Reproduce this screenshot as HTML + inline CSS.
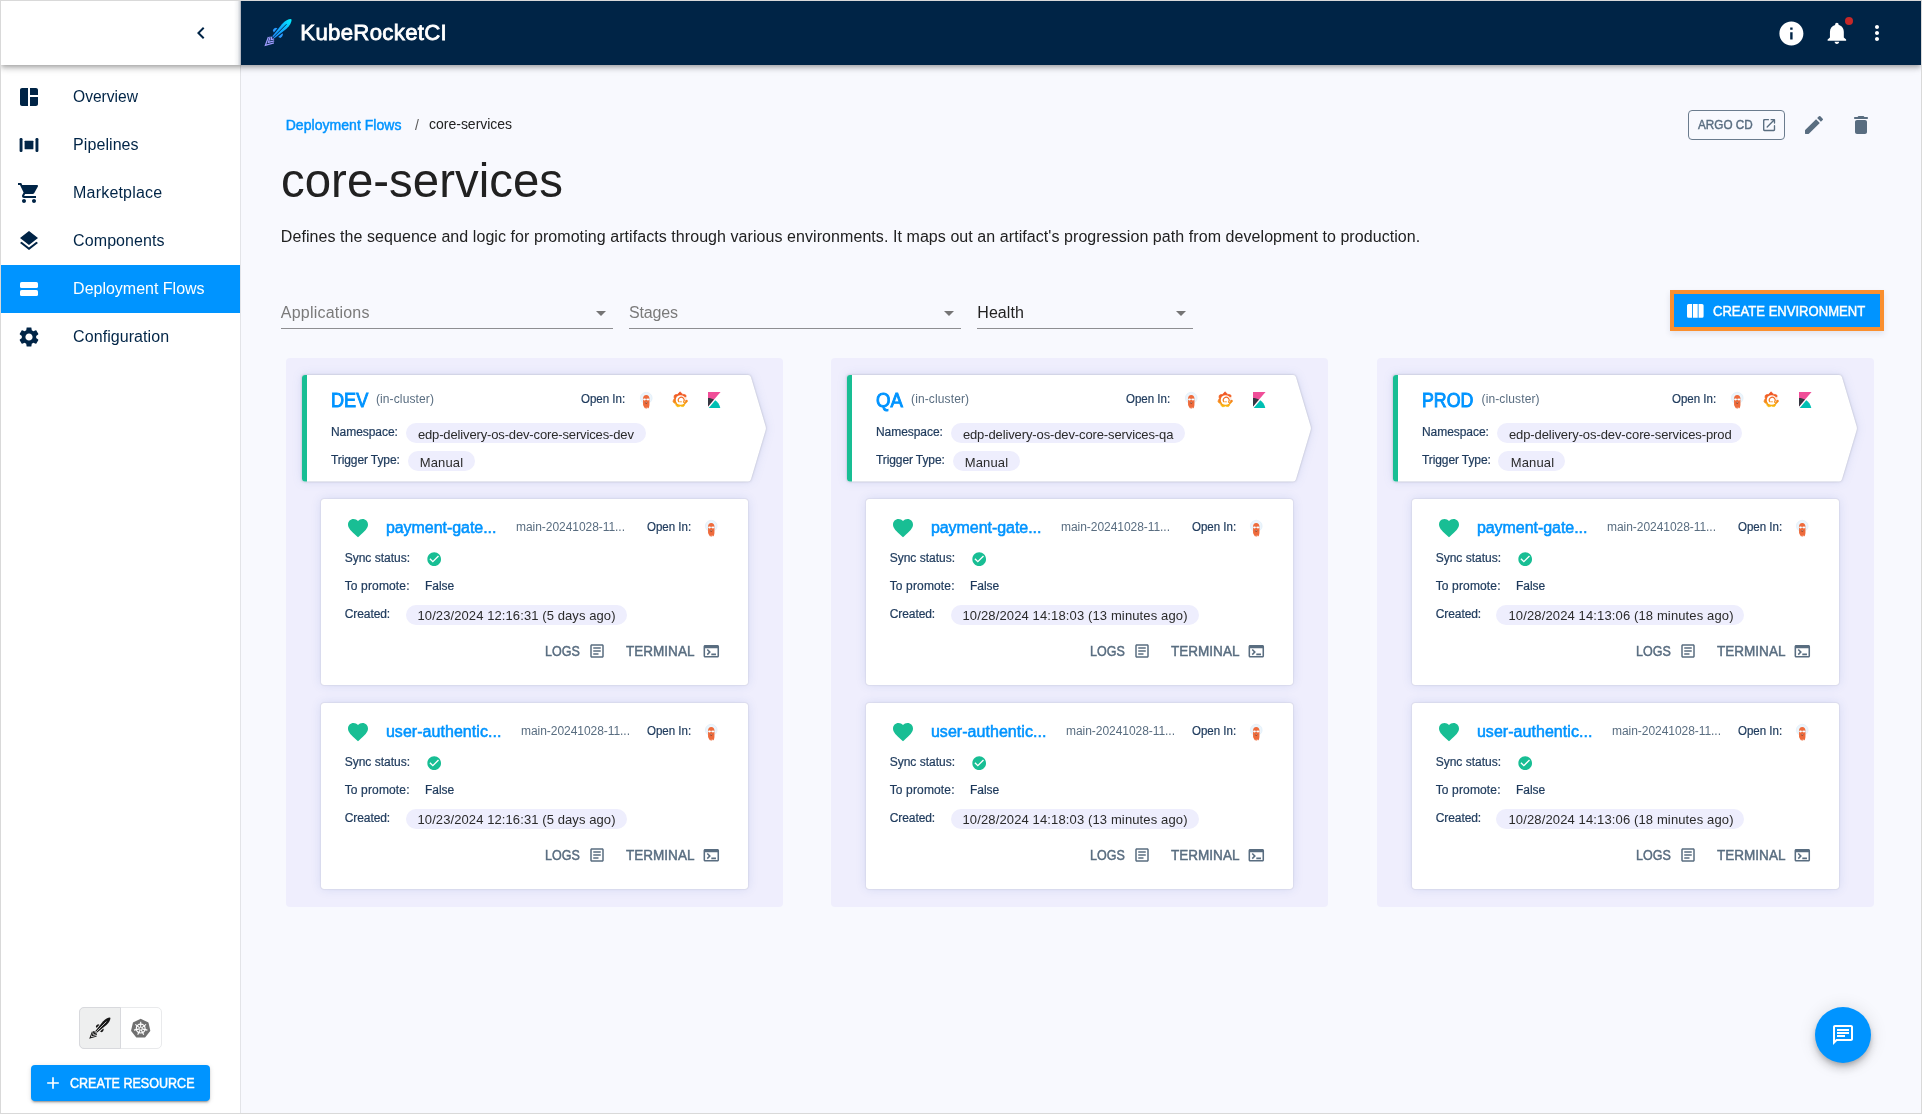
<!DOCTYPE html>
<html><head><meta charset="utf-8"><title>KubeRocketCI</title>
<style>
html,body{margin:0;padding:0}
body{width:1922px;height:1114px;overflow:hidden;position:relative;background:#F8F9FE;font-family:"Liberation Sans",sans-serif}
.t{position:absolute;white-space:nowrap;line-height:1;-webkit-font-smoothing:antialiased}
.i{position:absolute;display:block;overflow:visible}
.b{position:absolute;box-sizing:border-box}
#W{position:absolute;left:0;top:0;width:1922px;height:1114px;will-change:transform}
</style></head><body><div id="W">

<div class="b" style="left:1px;top:1px;width:240px;height:1112px;background:#fff;border-right:1px solid #E3E4E8"></div>
<div class="b" style="left:1px;top:265px;width:239px;height:48px;background:#0094FF"></div>
<svg class="i" style="left:17.00px;top:85.00px" width="24" height="24" viewBox="0 0 24 24" ><path d="M11 21H5c-1.1 0-2-.9-2-2V5c0-1.1.9-2 2-2h6v18zm2 0h6c1.1 0 2-.9 2-2v-7h-8v9zm8-11V5c0-1.1-.9-2-2-2h-6v7h8z" fill="#002446"/></svg>
<span id="t1" class="t" style="left:73.10px;top:89.00px;font-size:16px;color:#002446;font-weight:400;letter-spacing:0.000px;transform:scaleX(0.9743);transform-origin:0 50%;">Overview</span>
<svg class="i" style="left:17.00px;top:133.00px" width="24" height="24" viewBox="0 0 24 24" ><rect x="2.6" y="5" width="2.9" height="14" rx="1.2" fill="#002446"/><rect x="18.5" y="5" width="2.9" height="14" rx="1.2" fill="#002446"/><rect x="7.6" y="7.7" width="8.8" height="8.6" rx=".6" fill="#002446"/></svg>
<span id="t2" class="t" style="left:73.10px;top:137.00px;font-size:16px;color:#002446;font-weight:400;letter-spacing:0.070px;">Pipelines</span>
<svg class="i" style="left:17.00px;top:181.00px" width="24" height="24" viewBox="0 0 24 24" ><path d="M7 18c-1.1 0-1.99.9-1.99 2S5.9 22 7 22s2-.9 2-2-.9-2-2-2zM1 2v2h2l3.6 7.59-1.35 2.45c-.16.28-.25.61-.25.96 0 1.1.9 2 2 2h12v-2H7.42c-.14 0-.25-.11-.25-.25l.03-.12.9-1.63h7.45c.75 0 1.41-.41 1.75-1.03l3.58-6.49c.08-.14.12-.31.12-.48 0-.55-.45-1-1-1H5.21l-.94-2H1zm16 16c-1.1 0-1.99.9-1.99 2s.89 2 1.99 2 2-.9 2-2-.9-2-2-2z" fill="#002446"/></svg>
<span id="t3" class="t" style="left:73.10px;top:185.00px;font-size:16px;color:#002446;font-weight:400;letter-spacing:0.184px;">Marketplace</span>
<svg class="i" style="left:17.00px;top:229.00px" width="24" height="24" viewBox="0 0 24 24" ><path d="M11.99 18.54l-7.37-5.73L3 14.07l9 7 9-7-1.63-1.27-7.38 5.74zM12 16l7.36-5.73L21 9l-9-7-9 7 1.63 1.27L12 16z" fill="#002446"/></svg>
<span id="t4" class="t" style="left:73.10px;top:233.00px;font-size:16px;color:#002446;font-weight:400;letter-spacing:0.087px;">Components</span>
<svg class="i" style="left:17.00px;top:277.00px" width="24" height="24" viewBox="0 0 24 24" ><rect x="3" y="5" width="18" height="6" rx="1.6" fill="#fff"/><rect x="3" y="13" width="18" height="6" rx="1.6" fill="#fff"/></svg>
<span id="t5" class="t" style="left:73.10px;top:281.00px;font-size:16px;color:#fff;font-weight:400;letter-spacing:-0.007px;">Deployment Flows</span>
<svg class="i" style="left:17.00px;top:325.00px" width="24" height="24" viewBox="0 0 24 24" ><path d="M19.14 12.94c.04-.3.06-.61.06-.94 0-.32-.02-.64-.07-.94l2.03-1.58c.18-.14.23-.41.12-.61l-1.92-3.32c-.12-.22-.37-.29-.59-.22l-2.39.96c-.5-.38-1.03-.7-1.62-.94l-.36-2.54c-.04-.24-.24-.41-.48-.41h-3.84c-.24 0-.43.17-.47.41l-.36 2.54c-.59.24-1.13.57-1.62.94l-2.39-.96c-.22-.08-.47 0-.59.22L2.74 8.87c-.12.21-.08.47.12.61l2.03 1.58c-.05.3-.09.63-.09.94s.02.64.07.94l-2.03 1.58c-.18.14-.23.41-.12.61l1.92 3.32c.12.22.37.29.59.22l2.39-.96c.5.38 1.03.7 1.62.94l.36 2.54c.05.24.24.41.48.41h3.84c.24 0 .44-.17.47-.41l.36-2.54c.59-.24 1.13-.56 1.62-.94l2.39.96c.22.08.47 0 .59-.22l1.92-3.32c.12-.22.07-.47-.12-.61l-2.01-1.58zM12 15.6c-1.98 0-3.6-1.62-3.6-3.6s1.62-3.6 3.6-3.6 3.6 1.62 3.6 3.6-1.62 3.6-3.6 3.6z" fill="#002446"/></svg>
<span id="t6" class="t" style="left:73.10px;top:329.00px;font-size:16px;color:#002446;font-weight:400;letter-spacing:0.069px;">Configuration</span>
<div class="b" style="left:234px;top:1px;width:7px;height:64px;background:linear-gradient(to right,rgba(0,20,50,0),rgba(0,20,50,.05) 50%,rgba(0,20,50,.24))"></div>
<svg class="i" style="left:189.00px;top:21.00px" width="24" height="24" viewBox="0 0 24 24" ><path d="M15.41 7.41L14 6l-6 6 6 6 1.41-1.41L10.83 12z" fill="#002446"/></svg>
<div class="b" style="left:79px;top:1007px;width:83px;height:42px;border:1px solid #E9EAEC;border-radius:5px;background:#fff"></div>
<div class="b" style="left:79px;top:1007px;width:42px;height:42px;border:1px solid #D8D9DD;border-radius:5px 0 0 5px;background:#EEEFEF"></div>
<div class="b" style="left:31px;top:1065px;width:179px;height:36px;border-radius:4px;background:#0094FF;box-shadow:0 3px 1px -2px rgba(0,0,0,.2),0 2px 2px 0 rgba(0,0,0,.14),0 1px 5px 0 rgba(0,0,0,.12)"></div>
<svg class="i" style="left:43.00px;top:1073.00px" width="20" height="20" viewBox="0 0 24 24" ><path d="M19 13h-6v6h-2v-6H5v-2h6V5h2v6h6v2z" fill="#fff"/></svg>
<span id="t7" class="t" style="left:70.30px;top:1076.00px;font-size:14px;color:#fff;font-weight:400;letter-spacing:0.000px;-webkit-text-stroke:0.46px #fff;transform:scaleX(0.8958);transform-origin:0 50%;">CREATE RESOURCE</span>
<div class="b" style="left:1px;top:1px;width:1920px;height:64px;box-shadow:0 2px 4px -1px rgba(0,0,0,.2),0 4px 5px 0 rgba(0,0,0,.14),0 1px 10px 0 rgba(0,0,0,.12);pointer-events:none"></div>
<div class="b" style="left:241px;top:1px;width:1680px;height:64px;background:#002446"></div>
<span id="t8" class="t" style="left:300.30px;top:22.00px;font-size:22.2px;color:#fff;font-weight:400;letter-spacing:0.312px;-webkit-text-stroke:0.80px #fff;">KubeRocketCI</span>
<svg class="i" style="left:1776.60px;top:18.60px" width="28.8" height="28.8" viewBox="0 0 24 24" ><path d="M12 2C6.48 2 2 6.48 2 12s4.48 10 10 10 10-4.480 10-10S17.52 2 12 2zm1 15h-2v-6h2v6zm0-8h-2V7h2v2z" fill="#fff"/></svg>
<svg class="i" style="left:1823.1px;top:20.1px" width="27.75" height="26.1" viewBox="0 0 24 24" preserveAspectRatio="none"><path d="M12 22c1.1 0 2-.9 2-2h-4c0 1.1.89 2 2 2zm6-6v-5c0-3.070-1.64-5.640-4.5-6.320V4c0-.83-.67-1.5-1.5-1.5s-1.5.67-1.5 1.5v.68C7.630 5.360 6 7.920 6 11v5l-2 2v1h16v-1l-2-2z" fill="#fff"/></svg>
<div class="b" style="left:1845px;top:17px;width:8px;height:8px;border-radius:50%;background:#C62828"></div>
<svg class="i" style="left:1865.00px;top:21.00px" width="24" height="24" viewBox="0 0 24 24" ><path d="M12 8c1.1 0 2-.9 2-2s-.9-2-2-2-2 .9-2 2 .9 2 2 2zm0 2c-1.1 0-2 .9-2 2s.9 2 2 2 2-.9 2-2-.9-2-2-2zm0 6c-1.1 0-2 .9-2 2s.9 2 2 2 2-.9 2-2-.9-2-2-2z" fill="#fff"/></svg>
<span id="t9" class="t" style="left:285.70px;top:118.00px;font-size:14px;color:#0094FF;font-weight:400;letter-spacing:0.043px;-webkit-text-stroke:0.46px #0094FF;">Deployment Flows</span>
<span id="t10" class="t" style="left:415.00px;top:118.00px;font-size:14px;color:#5A5A5A;font-weight:400;letter-spacing:0.000px;">/</span>
<span id="t11" class="t" style="left:429.10px;top:117.00px;font-size:14px;color:#222;font-weight:400;letter-spacing:-0.021px;">core-services</span>
<div class="b" style="left:1688px;top:110px;width:97px;height:30px;border:1px solid #6B7C8E;border-radius:4px"></div>
<span id="t12" class="t" style="left:1698.00px;top:118.00px;font-size:13px;color:#596D80;font-weight:400;letter-spacing:0.000px;-webkit-text-stroke:0.43px #596D80;transform:scaleX(0.9016);transform-origin:0 50%;">ARGO CD</span>
<svg class="i" style="left:1761.00px;top:116.80px" width="16.2" height="16.2" viewBox="0 0 24 24" ><path d="M18 19H6c-.55 0-1-.45-1-1V6c0-.55.45-1 1-1h5c.55 0 1-.45 1-1s-.45-1-1-1H5a2 2 0 0 0-2 2v14c0 1.1.9 2 2 2h14c1.1 0 2-.9 2-2v-6c0-.55-.45-1-1-1s-1 .45-1 1v5c0 .55-.45 1-1 1zM14 4c0 .55.45 1 1 1h2.590l-9.130 9.130a.996.996 0 1 0 1.410 1.410L19 6.410V9c0 .55.45 1 1 1s1-.45 1-1V4c0-.55-.45-1-1-1h-5c-.55 0-1 .45-1 1z" fill="#596D80"/></svg>
<svg class="i" style="left:1801.50px;top:112.50px" width="24" height="24" viewBox="0 0 24 24" ><path d="M3 17.46v3.04c0 .28.22.5.5.5h3.04c.13 0 .26-.05.35-.15L17.81 9.94l-3.75-3.75L3.15 17.1c-.1.1-.15.22-.15.36zM20.71 7.04a.996.996 0 0 0 0-1.41l-2.340-2.340a.996.996 0 0 0-1.410 0l-1.830 1.830 3.750 3.750 1.830-1.830z" fill="#596D80"/></svg>
<svg class="i" style="left:1849.00px;top:112.90px" width="24" height="24" viewBox="0 0 24 24" ><path d="M6 19c0 1.1.9 2 2 2h8c1.1 0 2-.9 2-2V9c0-1.1-.9-2-2-2H8c-1.1 0-2 .9-2 2v10zM18 4h-2.500l-.71-.71c-.18-.18-.44-.29-.7-.29H9.910c-.26 0-.52.11-.7.29L8.500 4H6c-.55 0-1 .45-1 1s.45 1 1 1h12c.55 0 1-.45 1-1s-.45-1-1-1z" fill="#596D80"/></svg>
<span id="t13" class="t" style="left:280.70px;top:156.00px;font-size:48.5px;color:#212121;font-weight:400;letter-spacing:0.000px;transform:scaleX(0.9778);transform-origin:0 50%;">core-services</span>
<span id="t14" class="t" style="left:280.80px;top:229.00px;font-size:16px;color:#212121;font-weight:400;letter-spacing:0.066px;">Defines the sequence and logic for promoting artifacts through various environments. It maps out an artifact&#x27;s progression path from development to production.</span>
<div class="b" style="left:281px;top:328px;width:332px;height:1px;background:#8E8E92"></div>
<svg class="i" style="left:596px;top:311px" width="10" height="5" viewBox="0 0 10 5"><path d="M0 0h10L5 5z" fill="#757575"/></svg>
<span id="t15" class="t" style="left:280.80px;top:305.00px;font-size:16px;color:#7A7A7A;font-weight:400;letter-spacing:0.211px;">Applications</span>
<div class="b" style="left:629px;top:328px;width:332px;height:1px;background:#8E8E92"></div>
<svg class="i" style="left:944px;top:311px" width="10" height="5" viewBox="0 0 10 5"><path d="M0 0h10L5 5z" fill="#757575"/></svg>
<span id="t16" class="t" style="left:629.00px;top:305.00px;font-size:16px;color:#7A7A7A;font-weight:400;letter-spacing:-0.163px;">Stages</span>
<div class="b" style="left:977px;top:328px;width:216px;height:1px;background:#8E8E92"></div>
<svg class="i" style="left:1176px;top:311px" width="10" height="5" viewBox="0 0 10 5"><path d="M0 0h10L5 5z" fill="#757575"/></svg>
<span id="t17" class="t" style="left:977.30px;top:305.00px;font-size:16px;color:#222;font-weight:400;letter-spacing:0.050px;">Health</span>
<div class="b" style="left:1670px;top:290px;width:214px;height:41px;border:4px solid #FA8F2E;background:#0094FF;box-shadow:0 3px 6px rgba(30,40,90,.10)"></div>
<svg class="i" style="left:1686.5px;top:304px" width="16.6" height="13.8" viewBox="0 0 16.6 13.8"><path d="M1.5 0H5v13.8H1.500A1.500 1.500 0 0 1 0 12.300V1.500A1.500 1.500 0 0 1 1.500 0zM5.900 0h4.800v13.800H5.900zM11.600 0h3.500a1.500 1.500 0 0 1 1.500 1.500v10.800a1.500 1.500 0 0 1-1.500 1.500h-3.500z" fill="#fff"/></svg>
<span id="t18" class="t" style="left:1713.30px;top:304.00px;font-size:14px;color:#fff;font-weight:400;letter-spacing:0.000px;-webkit-text-stroke:0.46px #fff;transform:scaleX(0.9328);transform-origin:0 50%;">CREATE ENVIRONMENT</span>
<div class="b" style="left:286.00px;top:357.7px;width:497.3px;height:549.1px;border-radius:4px;background:#EFEEFD"></div>
<svg class="i" style="left:302.00px;top:374.6px;filter:drop-shadow(0 0 .8px rgba(0,0,0,.2)) drop-shadow(0 0 5px rgba(40,80,170,.13))" width="466" height="106.5" viewBox="0 0 466 106.8" preserveAspectRatio="none"><path d="M3,0 H446 Q448.3,0 449,2.200 L463.600,51.500 Q464.200,53.400 463.600,55.300 L449,104.600 Q448.300,106.800 446,106.800 H3 Q0,106.800 0,103.800 V3 Q0,0 3,0 Z" fill="#fff"/><path d="M3,0 H5 V106.800 H3 Q0,106.800 0,103.800 V3 Q0,0 3,0 Z" fill="#18BE94"/></svg>
<span id="t19" class="t" style="left:331.00px;top:390.00px;font-size:20px;color:#0094FF;font-weight:400;letter-spacing:0.000px;-webkit-text-stroke:0.95px #0094FF;transform:scaleX(0.9047);transform-origin:0 50%;">DEV</span>
<span id="t20" class="t" style="left:375.90px;top:393.00px;font-size:12px;color:#596D80;font-weight:400;letter-spacing:0.130px;">(in-cluster)</span>
<span id="t21" class="t" style="left:581.40px;top:393.00px;font-size:12px;color:#1E3A5C;font-weight:400;letter-spacing:0.000px;-webkit-text-stroke:0.22px #1E3A5C;transform:scaleX(0.9593);transform-origin:0 50%;">Open In:</span>
<svg class="i" style="left:639.70px;top:391.60px" width="12.6" height="16.8" viewBox="0 0 12.6 16.8"><ellipse cx="6.250" cy="6" rx="5.900" ry="5.700" fill="#ECF5FC" stroke="#DCEBF7" stroke-width=".6"/><path d="M6.250 3C8.300 3 9.450 4.600 9.450 6.600V12.500C9.450 14 9 15.300 8.600 16.100 8.400 16.500 8 16.400 7.900 16L7.600 15C7.500 15.700 7.300 16.200 7.100 16.500 6.900 16.800 6.600 16.800 6.450 16.500 6.250 16.100 6.150 15.600 6.050 15.100 5.950 15.600 5.800 16 5.600 16.300 5.400 16.600 5.100 16.600 4.900 16.200 4.400 15.300 3.050 14 3.050 12.500V6.600C3.050 4.600 4.200 3 6.250 3Z" fill="#EE6B3C"/><rect x="2.400" y="6.700" width="7.700" height="1.300" rx=".65" fill="#DCE4EC" opacity=".8"/><circle cx="4.550" cy="7.450" r="1.050" fill="#fff"/><circle cx="7.950" cy="7.550" r="1.050" fill="#fff"/><ellipse cx="6.250" cy="10.800" rx="1.050" ry=".65" fill="#4A2016"/><rect x="5.500" y="9.900" width="1.500" height=".5" rx=".2" fill="#F6CDBB"/></svg>
<svg class="i" style="left:672.20px;top:391.20px" width="16" height="17" viewBox="0 0 16 17"><defs><linearGradient id="ga0" gradientUnits="userSpaceOnUse" x1="0" y1="0" x2="0" y2="17"><stop offset="0" stop-color="#EF4A23"/><stop offset=".45" stop-color="#F26D25"/><stop offset=".75" stop-color="#F7A013"/><stop offset="1" stop-color="#FCCB0C"/></linearGradient></defs><polygon points="8.04,0.85 9.58,2.16 10.67,3.43 12.34,3.43 13.89,4.13 14.28,5.79 13.98,7.44 15.01,8.76 15.44,10.42 14.40,11.76 12.93,12.55 12.56,14.20 11.54,15.56 9.85,15.58 8.32,14.91 6.82,15.64 5.13,15.69 4.06,14.37 3.62,12.74 2.12,12.01 1.03,10.71 1.39,9.04 2.37,7.68 2.00,6.04 2.33,4.36 3.84,3.60 5.51,3.53 6.55,2.22" fill="url(#ga0)" stroke="url(#ga0)" stroke-width=".7" stroke-linejoin="round"/><circle cx="8.600" cy="9" r="4.850" fill="#fff"/><path d="M8.600 9L17 4V8.900z" fill="#fff" opacity=".8"/><path d="M6.700 10.700A2.950 2.950 0 1 1 11.500 11L13 12.500" fill="none" stroke="url(#ga0)" stroke-width="1.150" stroke-linecap="round"/><path d="M7.700 10.800H9.500" fill="none" stroke="url(#ga0)" stroke-width=".8" stroke-linecap="round"/></svg>
<svg class="i" style="left:707.50px;top:392.10px" width="12.6" height="16" viewBox="4 0 25 32" preserveAspectRatio="none"><polygon fill="#F04E98" points="4 0 4 28.789 28.935 0"/><path fill="#343741" d="M4,12 L4,28.789 L15.906,15.051 C12.497,13.147 8.391,12 4,12"/><path fill="#00BFB3" d="M18.479,16.664 L6.268,30.754 L5.189,32 L28.455,32 C27.179,25.711 23.519,20.227 18.479,16.664"/></svg>
<span id="t22" class="t" style="left:331.00px;top:426.00px;font-size:12px;color:#1E3A5C;font-weight:400;letter-spacing:-0.053px;-webkit-text-stroke:0.22px #1E3A5C;">Namespace:</span>
<div class="b" style="left:406.20px;top:423px;width:239.80px;height:20px;border-radius:10px;background:#EEEEFD"></div>
<span id="t23" class="t" style="left:417.90px;top:428.00px;font-size:13px;color:#2A2A2A;font-weight:400;letter-spacing:-0.141px;">edp-delivery-os-dev-core-services-dev</span>
<span id="t24" class="t" style="left:331.00px;top:454.00px;font-size:12px;color:#1E3A5C;font-weight:400;letter-spacing:-0.103px;-webkit-text-stroke:0.22px #1E3A5C;">Trigger Type:</span>
<div class="b" style="left:408.00px;top:451.1px;width:67px;height:20px;border-radius:10px;background:#EEEEFD"></div>
<span id="t25" class="t" style="left:419.70px;top:456.00px;font-size:13px;color:#2A2A2A;font-weight:400;letter-spacing:0.152px;">Manual</span>
<div class="b" style="left:321.00px;top:499.00px;width:427.3px;height:186.3px;border-radius:3px;background:#fff;box-shadow:0 0 1.5px rgba(0,0,0,.22),0 0 11px rgba(40,80,170,.13)"></div>
<svg class="i" style="left:345.60px;top:516.00px" width="24" height="24" viewBox="0 0 24 24" ><path d="M12 21.35l-1.45-1.32C5.4 15.36 2 12.28 2 8.500 2 5.420 4.420 3 7.500 3c1.740 0 3.410.81 4.500 2.090C13.090 3.810 14.760 3 16.500 3 19.580 3 22 5.420 22 8.500c0 3.780-3.400 6.860-8.550 11.540L12 21.350z" fill="#18BE94"/></svg>
<span id="t26" class="t" style="left:385.90px;top:520.00px;font-size:16px;color:#0094FF;font-weight:400;letter-spacing:-0.048px;-webkit-text-stroke:0.53px #0094FF;">payment-gate...</span>
<span id="t27" class="t" style="left:516.00px;top:521.00px;font-size:12px;color:#596D80;font-weight:400;letter-spacing:-0.048px;">main-20241028-11...</span>
<span id="t28" class="t" style="left:646.50px;top:521.00px;font-size:12px;color:#1E3A5C;font-weight:400;letter-spacing:0.000px;-webkit-text-stroke:0.22px #1E3A5C;transform:scaleX(0.9593);transform-origin:0 50%;">Open In:</span>
<svg class="i" style="left:705.00px;top:519.80px" width="12.6" height="16.8" viewBox="0 0 12.6 16.8"><ellipse cx="6.250" cy="6" rx="5.900" ry="5.700" fill="#ECF5FC" stroke="#DCEBF7" stroke-width=".6"/><path d="M6.250 3C8.300 3 9.450 4.600 9.450 6.600V12.500C9.450 14 9 15.300 8.600 16.100 8.400 16.500 8 16.400 7.900 16L7.600 15C7.500 15.700 7.300 16.200 7.100 16.500 6.900 16.800 6.600 16.800 6.450 16.500 6.250 16.100 6.150 15.600 6.050 15.100 5.950 15.600 5.800 16 5.600 16.300 5.400 16.600 5.100 16.600 4.900 16.200 4.400 15.300 3.050 14 3.050 12.500V6.600C3.050 4.600 4.200 3 6.250 3Z" fill="#EE6B3C"/><rect x="2.400" y="6.700" width="7.700" height="1.300" rx=".65" fill="#DCE4EC" opacity=".8"/><circle cx="4.550" cy="7.450" r="1.050" fill="#fff"/><circle cx="7.950" cy="7.550" r="1.050" fill="#fff"/><ellipse cx="6.250" cy="10.800" rx="1.050" ry=".65" fill="#4A2016"/><rect x="5.500" y="9.900" width="1.500" height=".5" rx=".2" fill="#F6CDBB"/></svg>
<span id="t29" class="t" style="left:344.70px;top:552.00px;font-size:12px;color:#1E3A5C;font-weight:400;letter-spacing:-0.007px;-webkit-text-stroke:0.22px #1E3A5C;">Sync status:</span>
<svg class="i" style="left:425.80px;top:551.00px" width="16.4" height="16.4" viewBox="0 0 24 24" ><path d="M12 2C6.480 2 2 6.480 2 12s4.480 10 10 10 10-4.480 10-10S17.520 2 12 2zm-2 15l-5-5 1.410-1.410L10 14.170l7.590-7.590L19 8l-9 9z" fill="#18BE94"/></svg>
<span id="t30" class="t" style="left:344.70px;top:580.00px;font-size:12px;color:#1E3A5C;font-weight:400;letter-spacing:0.142px;-webkit-text-stroke:0.22px #1E3A5C;">To promote:</span>
<span id="t31" class="t" style="left:425.10px;top:580.00px;font-size:12px;color:#1E3A5C;font-weight:400;letter-spacing:-0.086px;-webkit-text-stroke:0.22px #1E3A5C;">False</span>
<span id="t32" class="t" style="left:344.70px;top:608.00px;font-size:12px;color:#1E3A5C;font-weight:400;letter-spacing:-0.076px;-webkit-text-stroke:0.22px #1E3A5C;">Created:</span>
<div class="b" style="left:406.00px;top:605.10px;width:221.00px;height:20px;border-radius:10px;background:#EEEEFD"></div>
<span id="t33" class="t" style="left:417.50px;top:609.00px;font-size:13px;color:#2A2A2A;font-weight:400;letter-spacing:0.092px;">10/23/2024 12:16:31 (5 days ago)</span>
<span id="t34" class="t" style="left:545.00px;top:644.00px;font-size:14px;color:#596D80;font-weight:400;letter-spacing:0.000px;-webkit-text-stroke:0.46px #596D80;transform:scaleX(0.8943);transform-origin:0 50%;">LOGS</span>
<svg class="i" style="left:587.90px;top:642.20px" width="18" height="18" viewBox="0 0 24 24" ><path d="M19 5v14H5V5h14m0-2H5c-1.100 0-2 .9-2 2v14c0 1.100.9 2 2 2h14c1.100 0 2-.9 2-2V5c0-1.100-.9-2-2-2zm-5 14H7v-2h7v2zm3-4H7v-2h10v2zm0-4H7V7h10v2z" fill="#596D80"/></svg>
<span id="t35" class="t" style="left:625.90px;top:644.00px;font-size:14px;color:#596D80;font-weight:400;letter-spacing:0.000px;-webkit-text-stroke:0.46px #596D80;transform:scaleX(0.9671);transform-origin:0 50%;">TERMINAL</span>
<svg class="i" style="left:701.80px;top:641.80px" width="18.6" height="18.6" viewBox="0 0 24 24" ><path d="M20 4H4c-1.110 0-2 .9-2 2v12c0 1.100.89 2 2 2h16c1.100 0 2-.9 2-2V6c0-1.100-.89-2-2-2zm0 14H4V8h16v10zm-2-1h-6v-2h6v2zM7.500 17l-1.410-1.410L8.670 13l-2.590-2.590L7.500 9l4 4-4 4z" fill="#596D80"/></svg>
<div class="b" style="left:321.00px;top:703.00px;width:427.3px;height:186.3px;border-radius:3px;background:#fff;box-shadow:0 0 1.5px rgba(0,0,0,.22),0 0 11px rgba(40,80,170,.13)"></div>
<svg class="i" style="left:345.60px;top:720.00px" width="24" height="24" viewBox="0 0 24 24" ><path d="M12 21.35l-1.45-1.32C5.4 15.36 2 12.28 2 8.500 2 5.420 4.420 3 7.500 3c1.740 0 3.410.81 4.500 2.090C13.090 3.810 14.760 3 16.500 3 19.580 3 22 5.420 22 8.500c0 3.780-3.400 6.860-8.550 11.540L12 21.350z" fill="#18BE94"/></svg>
<span id="t36" class="t" style="left:385.90px;top:724.00px;font-size:16px;color:#0094FF;font-weight:400;letter-spacing:0.048px;-webkit-text-stroke:0.53px #0094FF;">user-authentic...</span>
<span id="t37" class="t" style="left:521.00px;top:725.00px;font-size:12px;color:#596D80;font-weight:400;letter-spacing:-0.048px;">main-20241028-11...</span>
<span id="t38" class="t" style="left:646.50px;top:725.00px;font-size:12px;color:#1E3A5C;font-weight:400;letter-spacing:0.000px;-webkit-text-stroke:0.22px #1E3A5C;transform:scaleX(0.9593);transform-origin:0 50%;">Open In:</span>
<svg class="i" style="left:705.00px;top:723.80px" width="12.6" height="16.8" viewBox="0 0 12.6 16.8"><ellipse cx="6.250" cy="6" rx="5.900" ry="5.700" fill="#ECF5FC" stroke="#DCEBF7" stroke-width=".6"/><path d="M6.250 3C8.300 3 9.450 4.600 9.450 6.600V12.500C9.450 14 9 15.300 8.600 16.100 8.400 16.500 8 16.400 7.900 16L7.600 15C7.500 15.700 7.300 16.200 7.100 16.500 6.900 16.800 6.600 16.800 6.450 16.500 6.250 16.100 6.150 15.600 6.050 15.100 5.950 15.600 5.800 16 5.600 16.300 5.400 16.600 5.100 16.600 4.900 16.200 4.400 15.300 3.050 14 3.050 12.500V6.600C3.050 4.600 4.200 3 6.250 3Z" fill="#EE6B3C"/><rect x="2.400" y="6.700" width="7.700" height="1.300" rx=".65" fill="#DCE4EC" opacity=".8"/><circle cx="4.550" cy="7.450" r="1.050" fill="#fff"/><circle cx="7.950" cy="7.550" r="1.050" fill="#fff"/><ellipse cx="6.250" cy="10.800" rx="1.050" ry=".65" fill="#4A2016"/><rect x="5.500" y="9.900" width="1.500" height=".5" rx=".2" fill="#F6CDBB"/></svg>
<span id="t39" class="t" style="left:344.70px;top:756.00px;font-size:12px;color:#1E3A5C;font-weight:400;letter-spacing:-0.007px;-webkit-text-stroke:0.22px #1E3A5C;">Sync status:</span>
<svg class="i" style="left:425.80px;top:755.00px" width="16.4" height="16.4" viewBox="0 0 24 24" ><path d="M12 2C6.480 2 2 6.480 2 12s4.480 10 10 10 10-4.480 10-10S17.520 2 12 2zm-2 15l-5-5 1.410-1.410L10 14.170l7.590-7.590L19 8l-9 9z" fill="#18BE94"/></svg>
<span id="t40" class="t" style="left:344.70px;top:784.00px;font-size:12px;color:#1E3A5C;font-weight:400;letter-spacing:0.142px;-webkit-text-stroke:0.22px #1E3A5C;">To promote:</span>
<span id="t41" class="t" style="left:425.10px;top:784.00px;font-size:12px;color:#1E3A5C;font-weight:400;letter-spacing:-0.086px;-webkit-text-stroke:0.22px #1E3A5C;">False</span>
<span id="t42" class="t" style="left:344.70px;top:812.00px;font-size:12px;color:#1E3A5C;font-weight:400;letter-spacing:-0.076px;-webkit-text-stroke:0.22px #1E3A5C;">Created:</span>
<div class="b" style="left:406.00px;top:809.10px;width:221.00px;height:20px;border-radius:10px;background:#EEEEFD"></div>
<span id="t43" class="t" style="left:417.50px;top:813.00px;font-size:13px;color:#2A2A2A;font-weight:400;letter-spacing:0.092px;">10/23/2024 12:16:31 (5 days ago)</span>
<span id="t44" class="t" style="left:545.00px;top:848.00px;font-size:14px;color:#596D80;font-weight:400;letter-spacing:0.000px;-webkit-text-stroke:0.46px #596D80;transform:scaleX(0.8943);transform-origin:0 50%;">LOGS</span>
<svg class="i" style="left:587.90px;top:846.20px" width="18" height="18" viewBox="0 0 24 24" ><path d="M19 5v14H5V5h14m0-2H5c-1.100 0-2 .9-2 2v14c0 1.100.9 2 2 2h14c1.100 0 2-.9 2-2V5c0-1.100-.9-2-2-2zm-5 14H7v-2h7v2zm3-4H7v-2h10v2zm0-4H7V7h10v2z" fill="#596D80"/></svg>
<span id="t45" class="t" style="left:625.90px;top:848.00px;font-size:14px;color:#596D80;font-weight:400;letter-spacing:0.000px;-webkit-text-stroke:0.46px #596D80;transform:scaleX(0.9671);transform-origin:0 50%;">TERMINAL</span>
<svg class="i" style="left:701.80px;top:845.80px" width="18.6" height="18.6" viewBox="0 0 24 24" ><path d="M20 4H4c-1.110 0-2 .9-2 2v12c0 1.100.89 2 2 2h16c1.100 0 2-.9 2-2V6c0-1.100-.89-2-2-2zm0 14H4V8h16v10zm-2-1h-6v-2h6v2zM7.500 17l-1.410-1.410L8.670 13l-2.590-2.590L7.500 9l4 4-4 4z" fill="#596D80"/></svg>
<div class="b" style="left:831.00px;top:357.7px;width:497.3px;height:549.1px;border-radius:4px;background:#EFEEFD"></div>
<svg class="i" style="left:847.00px;top:374.6px;filter:drop-shadow(0 0 .8px rgba(0,0,0,.2)) drop-shadow(0 0 5px rgba(40,80,170,.13))" width="466" height="106.5" viewBox="0 0 466 106.8" preserveAspectRatio="none"><path d="M3,0 H446 Q448.3,0 449,2.200 L463.600,51.500 Q464.200,53.400 463.600,55.300 L449,104.600 Q448.300,106.800 446,106.800 H3 Q0,106.800 0,103.800 V3 Q0,0 3,0 Z" fill="#fff"/><path d="M3,0 H5 V106.800 H3 Q0,106.800 0,103.800 V3 Q0,0 3,0 Z" fill="#18BE94"/></svg>
<span id="t46" class="t" style="left:876.00px;top:390.00px;font-size:20px;color:#0094FF;font-weight:400;letter-spacing:0.000px;-webkit-text-stroke:0.95px #0094FF;transform:scaleX(0.9317);transform-origin:0 50%;">QA</span>
<span id="t47" class="t" style="left:911.00px;top:393.00px;font-size:12px;color:#596D80;font-weight:400;letter-spacing:0.130px;">(in-cluster)</span>
<span id="t48" class="t" style="left:1126.40px;top:393.00px;font-size:12px;color:#1E3A5C;font-weight:400;letter-spacing:0.000px;-webkit-text-stroke:0.22px #1E3A5C;transform:scaleX(0.9593);transform-origin:0 50%;">Open In:</span>
<svg class="i" style="left:1184.70px;top:391.60px" width="12.6" height="16.8" viewBox="0 0 12.6 16.8"><ellipse cx="6.250" cy="6" rx="5.900" ry="5.700" fill="#ECF5FC" stroke="#DCEBF7" stroke-width=".6"/><path d="M6.250 3C8.300 3 9.450 4.600 9.450 6.600V12.500C9.450 14 9 15.300 8.600 16.100 8.400 16.500 8 16.400 7.900 16L7.600 15C7.500 15.700 7.300 16.200 7.100 16.500 6.900 16.800 6.600 16.800 6.450 16.500 6.250 16.100 6.150 15.600 6.050 15.100 5.950 15.600 5.800 16 5.600 16.300 5.400 16.600 5.100 16.600 4.900 16.200 4.400 15.300 3.050 14 3.050 12.500V6.600C3.050 4.600 4.200 3 6.250 3Z" fill="#EE6B3C"/><rect x="2.400" y="6.700" width="7.700" height="1.300" rx=".65" fill="#DCE4EC" opacity=".8"/><circle cx="4.550" cy="7.450" r="1.050" fill="#fff"/><circle cx="7.950" cy="7.550" r="1.050" fill="#fff"/><ellipse cx="6.250" cy="10.800" rx="1.050" ry=".65" fill="#4A2016"/><rect x="5.500" y="9.900" width="1.500" height=".5" rx=".2" fill="#F6CDBB"/></svg>
<svg class="i" style="left:1217.20px;top:391.20px" width="16" height="17" viewBox="0 0 16 17"><defs><linearGradient id="ga1" gradientUnits="userSpaceOnUse" x1="0" y1="0" x2="0" y2="17"><stop offset="0" stop-color="#EF4A23"/><stop offset=".45" stop-color="#F26D25"/><stop offset=".75" stop-color="#F7A013"/><stop offset="1" stop-color="#FCCB0C"/></linearGradient></defs><polygon points="8.04,0.85 9.58,2.16 10.67,3.43 12.34,3.43 13.89,4.13 14.28,5.79 13.98,7.44 15.01,8.76 15.44,10.42 14.40,11.76 12.93,12.55 12.56,14.20 11.54,15.56 9.85,15.58 8.32,14.91 6.82,15.64 5.13,15.69 4.06,14.37 3.62,12.74 2.12,12.01 1.03,10.71 1.39,9.04 2.37,7.68 2.00,6.04 2.33,4.36 3.84,3.60 5.51,3.53 6.55,2.22" fill="url(#ga1)" stroke="url(#ga1)" stroke-width=".7" stroke-linejoin="round"/><circle cx="8.600" cy="9" r="4.850" fill="#fff"/><path d="M8.600 9L17 4V8.900z" fill="#fff" opacity=".8"/><path d="M6.700 10.700A2.950 2.950 0 1 1 11.500 11L13 12.500" fill="none" stroke="url(#ga1)" stroke-width="1.150" stroke-linecap="round"/><path d="M7.700 10.800H9.500" fill="none" stroke="url(#ga1)" stroke-width=".8" stroke-linecap="round"/></svg>
<svg class="i" style="left:1252.50px;top:392.10px" width="12.6" height="16" viewBox="4 0 25 32" preserveAspectRatio="none"><polygon fill="#F04E98" points="4 0 4 28.789 28.935 0"/><path fill="#343741" d="M4,12 L4,28.789 L15.906,15.051 C12.497,13.147 8.391,12 4,12"/><path fill="#00BFB3" d="M18.479,16.664 L6.268,30.754 L5.189,32 L28.455,32 C27.179,25.711 23.519,20.227 18.479,16.664"/></svg>
<span id="t49" class="t" style="left:876.00px;top:426.00px;font-size:12px;color:#1E3A5C;font-weight:400;letter-spacing:-0.053px;-webkit-text-stroke:0.22px #1E3A5C;">Namespace:</span>
<div class="b" style="left:951.20px;top:423px;width:234.30px;height:20px;border-radius:10px;background:#EEEEFD"></div>
<span id="t50" class="t" style="left:962.90px;top:428.00px;font-size:13px;color:#2A2A2A;font-weight:400;letter-spacing:-0.117px;">edp-delivery-os-dev-core-services-qa</span>
<span id="t51" class="t" style="left:876.00px;top:454.00px;font-size:12px;color:#1E3A5C;font-weight:400;letter-spacing:-0.103px;-webkit-text-stroke:0.22px #1E3A5C;">Trigger Type:</span>
<div class="b" style="left:953.00px;top:451.1px;width:67px;height:20px;border-radius:10px;background:#EEEEFD"></div>
<span id="t52" class="t" style="left:964.70px;top:456.00px;font-size:13px;color:#2A2A2A;font-weight:400;letter-spacing:0.152px;">Manual</span>
<div class="b" style="left:866.00px;top:499.00px;width:427.3px;height:186.3px;border-radius:3px;background:#fff;box-shadow:0 0 1.5px rgba(0,0,0,.22),0 0 11px rgba(40,80,170,.13)"></div>
<svg class="i" style="left:890.60px;top:516.00px" width="24" height="24" viewBox="0 0 24 24" ><path d="M12 21.35l-1.45-1.32C5.4 15.36 2 12.28 2 8.500 2 5.420 4.420 3 7.500 3c1.740 0 3.410.81 4.500 2.090C13.090 3.810 14.760 3 16.500 3 19.580 3 22 5.420 22 8.500c0 3.780-3.400 6.860-8.550 11.540L12 21.350z" fill="#18BE94"/></svg>
<span id="t53" class="t" style="left:930.90px;top:520.00px;font-size:16px;color:#0094FF;font-weight:400;letter-spacing:-0.048px;-webkit-text-stroke:0.53px #0094FF;">payment-gate...</span>
<span id="t54" class="t" style="left:1061.00px;top:521.00px;font-size:12px;color:#596D80;font-weight:400;letter-spacing:-0.048px;">main-20241028-11...</span>
<span id="t55" class="t" style="left:1191.50px;top:521.00px;font-size:12px;color:#1E3A5C;font-weight:400;letter-spacing:0.000px;-webkit-text-stroke:0.22px #1E3A5C;transform:scaleX(0.9593);transform-origin:0 50%;">Open In:</span>
<svg class="i" style="left:1250.00px;top:519.80px" width="12.6" height="16.8" viewBox="0 0 12.6 16.8"><ellipse cx="6.250" cy="6" rx="5.900" ry="5.700" fill="#ECF5FC" stroke="#DCEBF7" stroke-width=".6"/><path d="M6.250 3C8.300 3 9.450 4.600 9.450 6.600V12.500C9.450 14 9 15.300 8.600 16.100 8.400 16.500 8 16.400 7.900 16L7.600 15C7.500 15.700 7.300 16.200 7.100 16.500 6.900 16.800 6.600 16.800 6.450 16.500 6.250 16.100 6.150 15.600 6.050 15.100 5.950 15.600 5.800 16 5.600 16.300 5.400 16.600 5.100 16.600 4.900 16.200 4.400 15.300 3.050 14 3.050 12.500V6.600C3.050 4.600 4.200 3 6.250 3Z" fill="#EE6B3C"/><rect x="2.400" y="6.700" width="7.700" height="1.300" rx=".65" fill="#DCE4EC" opacity=".8"/><circle cx="4.550" cy="7.450" r="1.050" fill="#fff"/><circle cx="7.950" cy="7.550" r="1.050" fill="#fff"/><ellipse cx="6.250" cy="10.800" rx="1.050" ry=".65" fill="#4A2016"/><rect x="5.500" y="9.900" width="1.500" height=".5" rx=".2" fill="#F6CDBB"/></svg>
<span id="t56" class="t" style="left:889.70px;top:552.00px;font-size:12px;color:#1E3A5C;font-weight:400;letter-spacing:-0.007px;-webkit-text-stroke:0.22px #1E3A5C;">Sync status:</span>
<svg class="i" style="left:970.80px;top:551.00px" width="16.4" height="16.4" viewBox="0 0 24 24" ><path d="M12 2C6.480 2 2 6.480 2 12s4.480 10 10 10 10-4.480 10-10S17.520 2 12 2zm-2 15l-5-5 1.410-1.410L10 14.170l7.590-7.590L19 8l-9 9z" fill="#18BE94"/></svg>
<span id="t57" class="t" style="left:889.70px;top:580.00px;font-size:12px;color:#1E3A5C;font-weight:400;letter-spacing:0.142px;-webkit-text-stroke:0.22px #1E3A5C;">To promote:</span>
<span id="t58" class="t" style="left:970.10px;top:580.00px;font-size:12px;color:#1E3A5C;font-weight:400;letter-spacing:-0.086px;-webkit-text-stroke:0.22px #1E3A5C;">False</span>
<span id="t59" class="t" style="left:889.70px;top:608.00px;font-size:12px;color:#1E3A5C;font-weight:400;letter-spacing:-0.076px;-webkit-text-stroke:0.22px #1E3A5C;">Created:</span>
<div class="b" style="left:951.00px;top:605.10px;width:248.00px;height:20px;border-radius:10px;background:#EEEEFD"></div>
<span id="t60" class="t" style="left:962.50px;top:609.00px;font-size:13px;color:#2A2A2A;font-weight:400;letter-spacing:0.130px;">10/28/2024 14:18:03 (13 minutes ago)</span>
<span id="t61" class="t" style="left:1090.00px;top:644.00px;font-size:14px;color:#596D80;font-weight:400;letter-spacing:0.000px;-webkit-text-stroke:0.46px #596D80;transform:scaleX(0.8943);transform-origin:0 50%;">LOGS</span>
<svg class="i" style="left:1132.90px;top:642.20px" width="18" height="18" viewBox="0 0 24 24" ><path d="M19 5v14H5V5h14m0-2H5c-1.100 0-2 .9-2 2v14c0 1.100.9 2 2 2h14c1.100 0 2-.9 2-2V5c0-1.100-.9-2-2-2zm-5 14H7v-2h7v2zm3-4H7v-2h10v2zm0-4H7V7h10v2z" fill="#596D80"/></svg>
<span id="t62" class="t" style="left:1170.90px;top:644.00px;font-size:14px;color:#596D80;font-weight:400;letter-spacing:0.000px;-webkit-text-stroke:0.46px #596D80;transform:scaleX(0.9671);transform-origin:0 50%;">TERMINAL</span>
<svg class="i" style="left:1246.80px;top:641.80px" width="18.6" height="18.6" viewBox="0 0 24 24" ><path d="M20 4H4c-1.110 0-2 .9-2 2v12c0 1.100.89 2 2 2h16c1.100 0 2-.9 2-2V6c0-1.100-.89-2-2-2zm0 14H4V8h16v10zm-2-1h-6v-2h6v2zM7.500 17l-1.410-1.410L8.670 13l-2.590-2.590L7.500 9l4 4-4 4z" fill="#596D80"/></svg>
<div class="b" style="left:866.00px;top:703.00px;width:427.3px;height:186.3px;border-radius:3px;background:#fff;box-shadow:0 0 1.5px rgba(0,0,0,.22),0 0 11px rgba(40,80,170,.13)"></div>
<svg class="i" style="left:890.60px;top:720.00px" width="24" height="24" viewBox="0 0 24 24" ><path d="M12 21.35l-1.45-1.32C5.4 15.36 2 12.28 2 8.500 2 5.420 4.420 3 7.500 3c1.740 0 3.410.81 4.500 2.090C13.090 3.810 14.760 3 16.500 3 19.580 3 22 5.420 22 8.500c0 3.780-3.400 6.860-8.550 11.540L12 21.350z" fill="#18BE94"/></svg>
<span id="t63" class="t" style="left:930.90px;top:724.00px;font-size:16px;color:#0094FF;font-weight:400;letter-spacing:0.048px;-webkit-text-stroke:0.53px #0094FF;">user-authentic...</span>
<span id="t64" class="t" style="left:1066.00px;top:725.00px;font-size:12px;color:#596D80;font-weight:400;letter-spacing:-0.048px;">main-20241028-11...</span>
<span id="t65" class="t" style="left:1191.50px;top:725.00px;font-size:12px;color:#1E3A5C;font-weight:400;letter-spacing:0.000px;-webkit-text-stroke:0.22px #1E3A5C;transform:scaleX(0.9593);transform-origin:0 50%;">Open In:</span>
<svg class="i" style="left:1250.00px;top:723.80px" width="12.6" height="16.8" viewBox="0 0 12.6 16.8"><ellipse cx="6.250" cy="6" rx="5.900" ry="5.700" fill="#ECF5FC" stroke="#DCEBF7" stroke-width=".6"/><path d="M6.250 3C8.300 3 9.450 4.600 9.450 6.600V12.500C9.450 14 9 15.300 8.600 16.100 8.400 16.500 8 16.400 7.900 16L7.600 15C7.500 15.700 7.300 16.200 7.100 16.500 6.900 16.800 6.600 16.800 6.450 16.500 6.250 16.100 6.150 15.600 6.050 15.100 5.950 15.600 5.800 16 5.600 16.300 5.400 16.600 5.100 16.600 4.900 16.200 4.400 15.300 3.050 14 3.050 12.500V6.600C3.050 4.600 4.200 3 6.250 3Z" fill="#EE6B3C"/><rect x="2.400" y="6.700" width="7.700" height="1.300" rx=".65" fill="#DCE4EC" opacity=".8"/><circle cx="4.550" cy="7.450" r="1.050" fill="#fff"/><circle cx="7.950" cy="7.550" r="1.050" fill="#fff"/><ellipse cx="6.250" cy="10.800" rx="1.050" ry=".65" fill="#4A2016"/><rect x="5.500" y="9.900" width="1.500" height=".5" rx=".2" fill="#F6CDBB"/></svg>
<span id="t66" class="t" style="left:889.70px;top:756.00px;font-size:12px;color:#1E3A5C;font-weight:400;letter-spacing:-0.007px;-webkit-text-stroke:0.22px #1E3A5C;">Sync status:</span>
<svg class="i" style="left:970.80px;top:755.00px" width="16.4" height="16.4" viewBox="0 0 24 24" ><path d="M12 2C6.480 2 2 6.480 2 12s4.480 10 10 10 10-4.480 10-10S17.520 2 12 2zm-2 15l-5-5 1.410-1.410L10 14.170l7.590-7.590L19 8l-9 9z" fill="#18BE94"/></svg>
<span id="t67" class="t" style="left:889.70px;top:784.00px;font-size:12px;color:#1E3A5C;font-weight:400;letter-spacing:0.142px;-webkit-text-stroke:0.22px #1E3A5C;">To promote:</span>
<span id="t68" class="t" style="left:970.10px;top:784.00px;font-size:12px;color:#1E3A5C;font-weight:400;letter-spacing:-0.086px;-webkit-text-stroke:0.22px #1E3A5C;">False</span>
<span id="t69" class="t" style="left:889.70px;top:812.00px;font-size:12px;color:#1E3A5C;font-weight:400;letter-spacing:-0.076px;-webkit-text-stroke:0.22px #1E3A5C;">Created:</span>
<div class="b" style="left:951.00px;top:809.10px;width:248.00px;height:20px;border-radius:10px;background:#EEEEFD"></div>
<span id="t70" class="t" style="left:962.50px;top:813.00px;font-size:13px;color:#2A2A2A;font-weight:400;letter-spacing:0.130px;">10/28/2024 14:18:03 (13 minutes ago)</span>
<span id="t71" class="t" style="left:1090.00px;top:848.00px;font-size:14px;color:#596D80;font-weight:400;letter-spacing:0.000px;-webkit-text-stroke:0.46px #596D80;transform:scaleX(0.8943);transform-origin:0 50%;">LOGS</span>
<svg class="i" style="left:1132.90px;top:846.20px" width="18" height="18" viewBox="0 0 24 24" ><path d="M19 5v14H5V5h14m0-2H5c-1.100 0-2 .9-2 2v14c0 1.100.9 2 2 2h14c1.100 0 2-.9 2-2V5c0-1.100-.9-2-2-2zm-5 14H7v-2h7v2zm3-4H7v-2h10v2zm0-4H7V7h10v2z" fill="#596D80"/></svg>
<span id="t72" class="t" style="left:1170.90px;top:848.00px;font-size:14px;color:#596D80;font-weight:400;letter-spacing:0.000px;-webkit-text-stroke:0.46px #596D80;transform:scaleX(0.9671);transform-origin:0 50%;">TERMINAL</span>
<svg class="i" style="left:1246.80px;top:845.80px" width="18.6" height="18.6" viewBox="0 0 24 24" ><path d="M20 4H4c-1.110 0-2 .9-2 2v12c0 1.100.89 2 2 2h16c1.100 0 2-.9 2-2V6c0-1.100-.89-2-2-2zm0 14H4V8h16v10zm-2-1h-6v-2h6v2zM7.500 17l-1.410-1.410L8.670 13l-2.590-2.590L7.500 9l4 4-4 4z" fill="#596D80"/></svg>
<div class="b" style="left:1377.00px;top:357.7px;width:497.3px;height:549.1px;border-radius:4px;background:#EFEEFD"></div>
<svg class="i" style="left:1393.00px;top:374.6px;filter:drop-shadow(0 0 .8px rgba(0,0,0,.2)) drop-shadow(0 0 5px rgba(40,80,170,.13))" width="466" height="106.5" viewBox="0 0 466 106.8" preserveAspectRatio="none"><path d="M3,0 H446 Q448.3,0 449,2.200 L463.600,51.500 Q464.200,53.400 463.600,55.300 L449,104.600 Q448.300,106.800 446,106.800 H3 Q0,106.800 0,103.800 V3 Q0,0 3,0 Z" fill="#fff"/><path d="M3,0 H5 V106.800 H3 Q0,106.800 0,103.800 V3 Q0,0 3,0 Z" fill="#18BE94"/></svg>
<span id="t73" class="t" style="left:1422.00px;top:390.00px;font-size:20px;color:#0094FF;font-weight:400;letter-spacing:0.000px;-webkit-text-stroke:0.95px #0094FF;transform:scaleX(0.8891);transform-origin:0 50%;">PROD</span>
<span id="t74" class="t" style="left:1481.50px;top:393.00px;font-size:12px;color:#596D80;font-weight:400;letter-spacing:0.130px;">(in-cluster)</span>
<span id="t75" class="t" style="left:1672.40px;top:393.00px;font-size:12px;color:#1E3A5C;font-weight:400;letter-spacing:0.000px;-webkit-text-stroke:0.22px #1E3A5C;transform:scaleX(0.9593);transform-origin:0 50%;">Open In:</span>
<svg class="i" style="left:1730.70px;top:391.60px" width="12.6" height="16.8" viewBox="0 0 12.6 16.8"><ellipse cx="6.250" cy="6" rx="5.900" ry="5.700" fill="#ECF5FC" stroke="#DCEBF7" stroke-width=".6"/><path d="M6.250 3C8.300 3 9.450 4.600 9.450 6.600V12.500C9.450 14 9 15.300 8.600 16.100 8.400 16.500 8 16.400 7.900 16L7.600 15C7.500 15.700 7.300 16.200 7.100 16.500 6.900 16.800 6.600 16.800 6.450 16.500 6.250 16.100 6.150 15.600 6.050 15.100 5.950 15.600 5.800 16 5.600 16.300 5.400 16.600 5.100 16.600 4.900 16.200 4.400 15.300 3.050 14 3.050 12.500V6.600C3.050 4.600 4.200 3 6.250 3Z" fill="#EE6B3C"/><rect x="2.400" y="6.700" width="7.700" height="1.300" rx=".65" fill="#DCE4EC" opacity=".8"/><circle cx="4.550" cy="7.450" r="1.050" fill="#fff"/><circle cx="7.950" cy="7.550" r="1.050" fill="#fff"/><ellipse cx="6.250" cy="10.800" rx="1.050" ry=".65" fill="#4A2016"/><rect x="5.500" y="9.900" width="1.500" height=".5" rx=".2" fill="#F6CDBB"/></svg>
<svg class="i" style="left:1763.20px;top:391.20px" width="16" height="17" viewBox="0 0 16 17"><defs><linearGradient id="ga2" gradientUnits="userSpaceOnUse" x1="0" y1="0" x2="0" y2="17"><stop offset="0" stop-color="#EF4A23"/><stop offset=".45" stop-color="#F26D25"/><stop offset=".75" stop-color="#F7A013"/><stop offset="1" stop-color="#FCCB0C"/></linearGradient></defs><polygon points="8.04,0.85 9.58,2.16 10.67,3.43 12.34,3.43 13.89,4.13 14.28,5.79 13.98,7.44 15.01,8.76 15.44,10.42 14.40,11.76 12.93,12.55 12.56,14.20 11.54,15.56 9.85,15.58 8.32,14.91 6.82,15.64 5.13,15.69 4.06,14.37 3.62,12.74 2.12,12.01 1.03,10.71 1.39,9.04 2.37,7.68 2.00,6.04 2.33,4.36 3.84,3.60 5.51,3.53 6.55,2.22" fill="url(#ga2)" stroke="url(#ga2)" stroke-width=".7" stroke-linejoin="round"/><circle cx="8.600" cy="9" r="4.850" fill="#fff"/><path d="M8.600 9L17 4V8.900z" fill="#fff" opacity=".8"/><path d="M6.700 10.700A2.950 2.950 0 1 1 11.500 11L13 12.500" fill="none" stroke="url(#ga2)" stroke-width="1.150" stroke-linecap="round"/><path d="M7.700 10.800H9.500" fill="none" stroke="url(#ga2)" stroke-width=".8" stroke-linecap="round"/></svg>
<svg class="i" style="left:1798.50px;top:392.10px" width="12.6" height="16" viewBox="4 0 25 32" preserveAspectRatio="none"><polygon fill="#F04E98" points="4 0 4 28.789 28.935 0"/><path fill="#343741" d="M4,12 L4,28.789 L15.906,15.051 C12.497,13.147 8.391,12 4,12"/><path fill="#00BFB3" d="M18.479,16.664 L6.268,30.754 L5.189,32 L28.455,32 C27.179,25.711 23.519,20.227 18.479,16.664"/></svg>
<span id="t76" class="t" style="left:1422.00px;top:426.00px;font-size:12px;color:#1E3A5C;font-weight:400;letter-spacing:-0.053px;-webkit-text-stroke:0.22px #1E3A5C;">Namespace:</span>
<div class="b" style="left:1497.20px;top:423px;width:245.00px;height:20px;border-radius:10px;background:#EEEEFD"></div>
<span id="t77" class="t" style="left:1508.90px;top:428.00px;font-size:13px;color:#2A2A2A;font-weight:400;letter-spacing:-0.090px;">edp-delivery-os-dev-core-services-prod</span>
<span id="t78" class="t" style="left:1422.00px;top:454.00px;font-size:12px;color:#1E3A5C;font-weight:400;letter-spacing:-0.103px;-webkit-text-stroke:0.22px #1E3A5C;">Trigger Type:</span>
<div class="b" style="left:1498.00px;top:451.1px;width:67px;height:20px;border-radius:10px;background:#EEEEFD"></div>
<span id="t79" class="t" style="left:1510.70px;top:456.00px;font-size:13px;color:#2A2A2A;font-weight:400;letter-spacing:0.152px;">Manual</span>
<div class="b" style="left:1412.00px;top:499.00px;width:427.3px;height:186.3px;border-radius:3px;background:#fff;box-shadow:0 0 1.5px rgba(0,0,0,.22),0 0 11px rgba(40,80,170,.13)"></div>
<svg class="i" style="left:1436.60px;top:516.00px" width="24" height="24" viewBox="0 0 24 24" ><path d="M12 21.35l-1.45-1.32C5.4 15.36 2 12.28 2 8.500 2 5.420 4.420 3 7.500 3c1.740 0 3.410.81 4.500 2.090C13.090 3.810 14.760 3 16.500 3 19.580 3 22 5.420 22 8.500c0 3.780-3.400 6.860-8.550 11.540L12 21.350z" fill="#18BE94"/></svg>
<span id="t80" class="t" style="left:1476.90px;top:520.00px;font-size:16px;color:#0094FF;font-weight:400;letter-spacing:-0.048px;-webkit-text-stroke:0.53px #0094FF;">payment-gate...</span>
<span id="t81" class="t" style="left:1607.00px;top:521.00px;font-size:12px;color:#596D80;font-weight:400;letter-spacing:-0.048px;">main-20241028-11...</span>
<span id="t82" class="t" style="left:1737.50px;top:521.00px;font-size:12px;color:#1E3A5C;font-weight:400;letter-spacing:0.000px;-webkit-text-stroke:0.22px #1E3A5C;transform:scaleX(0.9593);transform-origin:0 50%;">Open In:</span>
<svg class="i" style="left:1796.00px;top:519.80px" width="12.6" height="16.8" viewBox="0 0 12.6 16.8"><ellipse cx="6.250" cy="6" rx="5.900" ry="5.700" fill="#ECF5FC" stroke="#DCEBF7" stroke-width=".6"/><path d="M6.250 3C8.300 3 9.450 4.600 9.450 6.600V12.500C9.450 14 9 15.300 8.600 16.100 8.400 16.500 8 16.400 7.900 16L7.600 15C7.500 15.700 7.300 16.200 7.100 16.500 6.900 16.800 6.600 16.800 6.450 16.500 6.250 16.100 6.150 15.600 6.050 15.100 5.950 15.600 5.800 16 5.600 16.300 5.400 16.600 5.100 16.600 4.900 16.200 4.400 15.300 3.050 14 3.050 12.500V6.600C3.050 4.600 4.200 3 6.250 3Z" fill="#EE6B3C"/><rect x="2.400" y="6.700" width="7.700" height="1.300" rx=".65" fill="#DCE4EC" opacity=".8"/><circle cx="4.550" cy="7.450" r="1.050" fill="#fff"/><circle cx="7.950" cy="7.550" r="1.050" fill="#fff"/><ellipse cx="6.250" cy="10.800" rx="1.050" ry=".65" fill="#4A2016"/><rect x="5.500" y="9.900" width="1.500" height=".5" rx=".2" fill="#F6CDBB"/></svg>
<span id="t83" class="t" style="left:1435.70px;top:552.00px;font-size:12px;color:#1E3A5C;font-weight:400;letter-spacing:-0.007px;-webkit-text-stroke:0.22px #1E3A5C;">Sync status:</span>
<svg class="i" style="left:1516.80px;top:551.00px" width="16.4" height="16.4" viewBox="0 0 24 24" ><path d="M12 2C6.480 2 2 6.480 2 12s4.480 10 10 10 10-4.480 10-10S17.520 2 12 2zm-2 15l-5-5 1.410-1.410L10 14.170l7.590-7.590L19 8l-9 9z" fill="#18BE94"/></svg>
<span id="t84" class="t" style="left:1435.70px;top:580.00px;font-size:12px;color:#1E3A5C;font-weight:400;letter-spacing:0.142px;-webkit-text-stroke:0.22px #1E3A5C;">To promote:</span>
<span id="t85" class="t" style="left:1516.10px;top:580.00px;font-size:12px;color:#1E3A5C;font-weight:400;letter-spacing:-0.086px;-webkit-text-stroke:0.22px #1E3A5C;">False</span>
<span id="t86" class="t" style="left:1435.70px;top:608.00px;font-size:12px;color:#1E3A5C;font-weight:400;letter-spacing:-0.076px;-webkit-text-stroke:0.22px #1E3A5C;">Created:</span>
<div class="b" style="left:1496.00px;top:605.10px;width:248.00px;height:20px;border-radius:10px;background:#EEEEFD"></div>
<span id="t87" class="t" style="left:1508.50px;top:609.00px;font-size:13px;color:#2A2A2A;font-weight:400;letter-spacing:0.130px;">10/28/2024 14:13:06 (18 minutes ago)</span>
<span id="t88" class="t" style="left:1636.00px;top:644.00px;font-size:14px;color:#596D80;font-weight:400;letter-spacing:0.000px;-webkit-text-stroke:0.46px #596D80;transform:scaleX(0.8943);transform-origin:0 50%;">LOGS</span>
<svg class="i" style="left:1678.90px;top:642.20px" width="18" height="18" viewBox="0 0 24 24" ><path d="M19 5v14H5V5h14m0-2H5c-1.100 0-2 .9-2 2v14c0 1.100.9 2 2 2h14c1.100 0 2-.9 2-2V5c0-1.100-.9-2-2-2zm-5 14H7v-2h7v2zm3-4H7v-2h10v2zm0-4H7V7h10v2z" fill="#596D80"/></svg>
<span id="t89" class="t" style="left:1716.90px;top:644.00px;font-size:14px;color:#596D80;font-weight:400;letter-spacing:0.000px;-webkit-text-stroke:0.46px #596D80;transform:scaleX(0.9671);transform-origin:0 50%;">TERMINAL</span>
<svg class="i" style="left:1792.80px;top:641.80px" width="18.6" height="18.6" viewBox="0 0 24 24" ><path d="M20 4H4c-1.110 0-2 .9-2 2v12c0 1.100.89 2 2 2h16c1.100 0 2-.9 2-2V6c0-1.100-.89-2-2-2zm0 14H4V8h16v10zm-2-1h-6v-2h6v2zM7.500 17l-1.410-1.410L8.670 13l-2.590-2.590L7.500 9l4 4-4 4z" fill="#596D80"/></svg>
<div class="b" style="left:1412.00px;top:703.00px;width:427.3px;height:186.3px;border-radius:3px;background:#fff;box-shadow:0 0 1.5px rgba(0,0,0,.22),0 0 11px rgba(40,80,170,.13)"></div>
<svg class="i" style="left:1436.60px;top:720.00px" width="24" height="24" viewBox="0 0 24 24" ><path d="M12 21.35l-1.45-1.32C5.4 15.36 2 12.28 2 8.500 2 5.420 4.420 3 7.500 3c1.740 0 3.410.81 4.500 2.090C13.090 3.810 14.760 3 16.500 3 19.580 3 22 5.420 22 8.500c0 3.780-3.400 6.860-8.550 11.540L12 21.350z" fill="#18BE94"/></svg>
<span id="t90" class="t" style="left:1476.90px;top:724.00px;font-size:16px;color:#0094FF;font-weight:400;letter-spacing:0.048px;-webkit-text-stroke:0.53px #0094FF;">user-authentic...</span>
<span id="t91" class="t" style="left:1612.00px;top:725.00px;font-size:12px;color:#596D80;font-weight:400;letter-spacing:-0.048px;">main-20241028-11...</span>
<span id="t92" class="t" style="left:1737.50px;top:725.00px;font-size:12px;color:#1E3A5C;font-weight:400;letter-spacing:0.000px;-webkit-text-stroke:0.22px #1E3A5C;transform:scaleX(0.9593);transform-origin:0 50%;">Open In:</span>
<svg class="i" style="left:1796.00px;top:723.80px" width="12.6" height="16.8" viewBox="0 0 12.6 16.8"><ellipse cx="6.250" cy="6" rx="5.900" ry="5.700" fill="#ECF5FC" stroke="#DCEBF7" stroke-width=".6"/><path d="M6.250 3C8.300 3 9.450 4.600 9.450 6.600V12.500C9.450 14 9 15.300 8.600 16.100 8.400 16.500 8 16.400 7.900 16L7.600 15C7.500 15.700 7.300 16.200 7.100 16.500 6.900 16.800 6.600 16.800 6.450 16.500 6.250 16.100 6.150 15.600 6.050 15.100 5.950 15.600 5.800 16 5.600 16.300 5.400 16.600 5.100 16.600 4.900 16.200 4.400 15.300 3.050 14 3.050 12.500V6.600C3.050 4.600 4.200 3 6.250 3Z" fill="#EE6B3C"/><rect x="2.400" y="6.700" width="7.700" height="1.300" rx=".65" fill="#DCE4EC" opacity=".8"/><circle cx="4.550" cy="7.450" r="1.050" fill="#fff"/><circle cx="7.950" cy="7.550" r="1.050" fill="#fff"/><ellipse cx="6.250" cy="10.800" rx="1.050" ry=".65" fill="#4A2016"/><rect x="5.500" y="9.900" width="1.500" height=".5" rx=".2" fill="#F6CDBB"/></svg>
<span id="t93" class="t" style="left:1435.70px;top:756.00px;font-size:12px;color:#1E3A5C;font-weight:400;letter-spacing:-0.007px;-webkit-text-stroke:0.22px #1E3A5C;">Sync status:</span>
<svg class="i" style="left:1516.80px;top:755.00px" width="16.4" height="16.4" viewBox="0 0 24 24" ><path d="M12 2C6.480 2 2 6.480 2 12s4.480 10 10 10 10-4.480 10-10S17.520 2 12 2zm-2 15l-5-5 1.410-1.410L10 14.170l7.590-7.590L19 8l-9 9z" fill="#18BE94"/></svg>
<span id="t94" class="t" style="left:1435.70px;top:784.00px;font-size:12px;color:#1E3A5C;font-weight:400;letter-spacing:0.142px;-webkit-text-stroke:0.22px #1E3A5C;">To promote:</span>
<span id="t95" class="t" style="left:1516.10px;top:784.00px;font-size:12px;color:#1E3A5C;font-weight:400;letter-spacing:-0.086px;-webkit-text-stroke:0.22px #1E3A5C;">False</span>
<span id="t96" class="t" style="left:1435.70px;top:812.00px;font-size:12px;color:#1E3A5C;font-weight:400;letter-spacing:-0.076px;-webkit-text-stroke:0.22px #1E3A5C;">Created:</span>
<div class="b" style="left:1496.00px;top:809.10px;width:248.00px;height:20px;border-radius:10px;background:#EEEEFD"></div>
<span id="t97" class="t" style="left:1508.50px;top:813.00px;font-size:13px;color:#2A2A2A;font-weight:400;letter-spacing:0.130px;">10/28/2024 14:13:06 (18 minutes ago)</span>
<span id="t98" class="t" style="left:1636.00px;top:848.00px;font-size:14px;color:#596D80;font-weight:400;letter-spacing:0.000px;-webkit-text-stroke:0.46px #596D80;transform:scaleX(0.8943);transform-origin:0 50%;">LOGS</span>
<svg class="i" style="left:1678.90px;top:846.20px" width="18" height="18" viewBox="0 0 24 24" ><path d="M19 5v14H5V5h14m0-2H5c-1.100 0-2 .9-2 2v14c0 1.100.9 2 2 2h14c1.100 0 2-.9 2-2V5c0-1.100-.9-2-2-2zm-5 14H7v-2h7v2zm3-4H7v-2h10v2zm0-4H7V7h10v2z" fill="#596D80"/></svg>
<span id="t99" class="t" style="left:1716.90px;top:848.00px;font-size:14px;color:#596D80;font-weight:400;letter-spacing:0.000px;-webkit-text-stroke:0.46px #596D80;transform:scaleX(0.9671);transform-origin:0 50%;">TERMINAL</span>
<svg class="i" style="left:1792.80px;top:845.80px" width="18.6" height="18.6" viewBox="0 0 24 24" ><path d="M20 4H4c-1.110 0-2 .9-2 2v12c0 1.100.89 2 2 2h16c1.100 0 2-.9 2-2V6c0-1.100-.89-2-2-2zm0 14H4V8h16v10zm-2-1h-6v-2h6v2zM7.500 17l-1.410-1.410L8.670 13l-2.590-2.590L7.500 9l4 4-4 4z" fill="#596D80"/></svg>
<svg class="i" style="left:0;top:0" width="1922" height="1114" viewBox="0 0 1922 1114"><defs><linearGradient id="rgh" x1="0" y1="0" x2="1" y2="0"><stop offset="0" stop-color="#1E8FFF"/><stop offset=".55" stop-color="#0FB4FF"/><stop offset="1" stop-color="#00F0FF"/></linearGradient></defs><g transform="translate(273.60,37.10) rotate(-45) scale(1.000)"><path d="M3.4,-3.100 L4.300,-5.400 Q6.400,-6.200 8.200,-5 L9,-3.600 Z" fill="#2A9BFF"/><path d="M3.4,3.100 L4.300,5.400 Q6.400,6.200 8.200,5 L9,3.600 Z" fill="#2A9BFF"/><path d="M-.3,-1.500 L15,-3.250 C20,-3.500 23,-2.200 25,-.5 L25,.5 C23,2.200 20,3.500 15,3.250 L-.3,1.500 Z" fill="url(#rgh)"/><path d="M-.5,0 H18.200" stroke="#002446" stroke-width=".9" fill="none"/><g fill="none" stroke="#9F9CFF" stroke-width="1.250" stroke-linejoin="miter"><path d="M-3.600,-3.700 L-11.600,0 L-3.900,4.300"/><path d="M-2.100,-2.700 L-7.300,0 L-2.200,3"/><path d="M-.9,-1.600 L-3.500,0 L-.9,1.700"/></g></g></svg>
<svg class="i" style="left:0;top:0" width="1922" height="1114" viewBox="0 0 1922 1114"><defs><linearGradient id="rgt" x1="0" y1="0" x2="1" y2="0"><stop offset="0" stop-color="#1E8FFF"/><stop offset=".55" stop-color="#0FB4FF"/><stop offset="1" stop-color="#00F0FF"/></linearGradient></defs><g transform="translate(96.40,1031.60) rotate(-45) scale(0.780)"><path d="M3.4,-3.100 L4.300,-5.400 Q6.400,-6.200 8.200,-5 L9,-3.600 Z" fill="#161616"/><path d="M3.4,3.100 L4.300,5.400 Q6.400,6.200 8.200,5 L9,3.600 Z" fill="#161616"/><path d="M-.3,-1.500 L15,-3.250 C20,-3.500 23,-2.200 25,-.5 L25,.5 C23,2.200 20,3.500 15,3.250 L-.3,1.500 Z" fill="#161616"/><path d="M-.5,0 H18.200" stroke="#EEEFEF" stroke-width=".9" fill="none"/><g fill="none" stroke="#161616" stroke-width="1.250" stroke-linejoin="miter"><path d="M-3.600,-3.700 L-11.600,0 L-3.900,4.300"/><path d="M-2.100,-2.700 L-7.300,0 L-2.200,3"/><path d="M-.9,-1.600 L-3.500,0 L-.9,1.700"/></g></g></svg>
<svg class="i" style="left:0;top:0" width="1922" height="1114" viewBox="0 0 1922 1114"><polygon points="140.70,1019.80 147.58,1023.11 149.28,1030.56 144.52,1036.53 136.88,1036.53 132.12,1030.56 133.82,1023.11" fill="#707070" stroke="#707070" stroke-width="2" stroke-linejoin="round"/><circle cx="140.70" cy="1028.60" r="4.40" fill="none" stroke="#fff" stroke-width="1.200"/><path d="M140.70,1027.40 L140.70,1021.74" stroke="#fff" stroke-width="1.100"/><path d="M141.64,1027.85 L146.07,1024.32" stroke="#fff" stroke-width="1.100"/><path d="M141.87,1028.87 L147.39,1030.13" stroke="#fff" stroke-width="1.100"/><path d="M141.22,1029.68 L143.68,1034.78" stroke="#fff" stroke-width="1.100"/><path d="M140.18,1029.68 L137.72,1034.78" stroke="#fff" stroke-width="1.100"/><path d="M139.53,1028.87 L134.01,1030.13" stroke="#fff" stroke-width="1.100"/><path d="M139.76,1027.85 L135.33,1024.32" stroke="#fff" stroke-width="1.100"/><circle cx="140.70" cy="1028.60" r="1.300" fill="#707070" stroke="#fff" stroke-width=".8"/></svg>
<div class="b" style="left:1815px;top:1007px;width:56px;height:56px;border-radius:50%;background:#0094FF;box-shadow:0 3px 5px -1px rgba(0,0,0,.2),0 6px 10px 0 rgba(0,0,0,.14),0 1px 18px 0 rgba(0,0,0,.12)"></div>
<svg class="i" style="left:1830.80px;top:1022.70px" width="24" height="24" viewBox="0 0 24 24" ><path d="M4 4h16v12H5.170L4 17.170V4m0-2c-1.100 0-1.990.9-1.990 2L2 22l4-4h14c1.100 0 2-.9 2-2V4c0-1.100-.9-2-2-2H4zm2 10h8v2H6v-2zm0-3h12v2H6V9zm0-3h12v2H6V6z" fill="#fff"/></svg>
<div class="b" style="left:0;top:0;width:1922px;height:1114px;border:1px solid #D9D9D9;pointer-events:none"></div>
</div></body></html>
